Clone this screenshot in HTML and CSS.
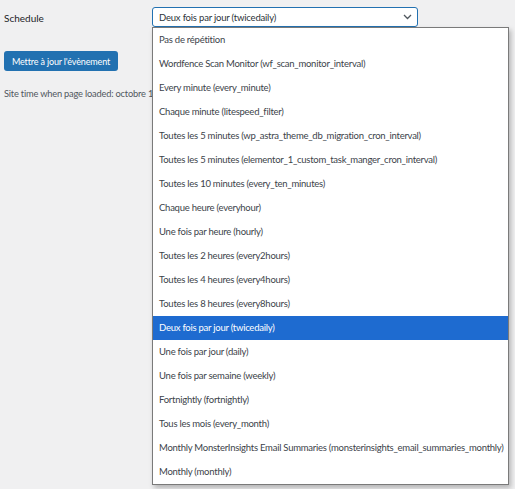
FILE: index.html
```html
<!DOCTYPE html>
<html lang="fr">
<head>
<meta charset="utf-8">
<title>Schedule</title>
<link rel="stylesheet" href="styles.css">
</head>
<body>
<div class="page">
  <div class="field-row">
    <label class="field-label">Schedule</label>
    <div class="select-wrap">
      <div class="select-box">
        <span class="select-value">Deux fois par jour (twicedaily)</span>
        <svg class="chevron" width="9" height="6" viewBox="0 0 9 6"><path d="M1 1 L4.5 4.5 L8 1" fill="none" stroke="#50575e" stroke-width="1.3"/></svg>
      </div>
      <ul class="dropdown">
        <li class="option">Pas de répétition</li>
        <li class="option">Wordfence Scan Monitor (wf_scan_monitor_interval)</li>
        <li class="option">Every minute (every_minute)</li>
        <li class="option">Chaque minute (litespeed_filter)</li>
        <li class="option">Toutes les 5 minutes (wp_astra_theme_db_migration_cron_interval)</li>
        <li class="option">Toutes les 5 minutes (elementor_1_custom_task_manger_cron_interval)</li>
        <li class="option">Toutes les 10 minutes (every_ten_minutes)</li>
        <li class="option">Chaque heure (everyhour)</li>
        <li class="option">Une fois par heure (hourly)</li>
        <li class="option">Toutes les 2 heures (every2hours)</li>
        <li class="option">Toutes les 4 heures (every4hours)</li>
        <li class="option">Toutes les 8 heures (every8hours)</li>
        <li class="option selected">Deux fois par jour (twicedaily)</li>
        <li class="option">Une fois par jour (daily)</li>
        <li class="option">Une fois par semaine (weekly)</li>
        <li class="option">Fortnightly (fortnightly)</li>
        <li class="option">Tous les mois (every_month)</li>
        <li class="option">Monthly MonsterInsights Email Summaries (monsterinsights_email_summaries_monthly)</li>
        <li class="option">Monthly (monthly)</li>
      </ul>
    </div>
  </div>
  <div class="actions">
    <button class="button-primary">Mettre à jour l'évènement</button>
  </div>
  <p class="site-time">Site time when page loaded: octobre 1</p>
</div>
</body>
</html>
```
FILE: styles.css
```css
html, body {
  margin: 0;
  padding: 0;
}
body {
  background: #f0f0f1;
  font-family: "Lato", "Noto Sans", sans-serif;
  font-size: 10px;
  color: #1d2327;
  width: 515px;
  height: 489px;
  overflow: hidden;
}
.page {
  padding: 7px 4px 0 4px;
}
.field-row {
  display: flex;
  align-items: flex-start;
  height: 20px;
}
.field-label {
  width: 148px;
  line-height: 22px;
  height: 20px;
  color: #1d2327;
  font-size: 10px;
}
.select-wrap {
  position: relative;
  width: 266px;
}
.select-box {
  box-sizing: border-box;
  height: 20px;
  border: 1px solid #2271b1;
  border-radius: 3px;
  background: #fff;
  display: flex;
  align-items: center;
  justify-content: space-between;
  padding: 0 5px 0 6px;
  color: #2c3338;
  font-size: 9.5px;
  letter-spacing: -0.2px;
}
.chevron {
  margin-right: 0;
}
.dropdown {
  position: absolute;
  top: 20px;
  left: 0;
  width: 357px;
  box-sizing: border-box;
  margin: 0;
  padding: 0;
  list-style: none;
  background: #fff;
  border: 1px solid #7a7a7a;
  box-shadow: 2px 3px 5px rgba(0, 0, 0, 0.25);
  z-index: 10;
}
.option {
  height: 24px;
  line-height: 24px;
  padding-left: 6px;
  color: #3c434a;
  white-space: nowrap;
  font-size: 9.5px;
  letter-spacing: -0.25px;
}
.option.selected {
  background: #1e6bd0;
  color: #fff;
}
.actions {
  display: flex;
  margin-top: 24px;
}
.button-primary {
  font-family: inherit;
  font-size: 9px;
  letter-spacing: -0.15px;
  background: #2271b1;
  color: #fff;
  border: none;
  border-radius: 3px;
  height: 20px;
  width: 114px;
  padding: 0;
  white-space: nowrap;
}
.site-time {
  margin: 16px 0 0 0;
  line-height: 14px;
  font-size: 9.3px;
  letter-spacing: -0.2px;
  color: #50575e;
  white-space: nowrap;
}
```
